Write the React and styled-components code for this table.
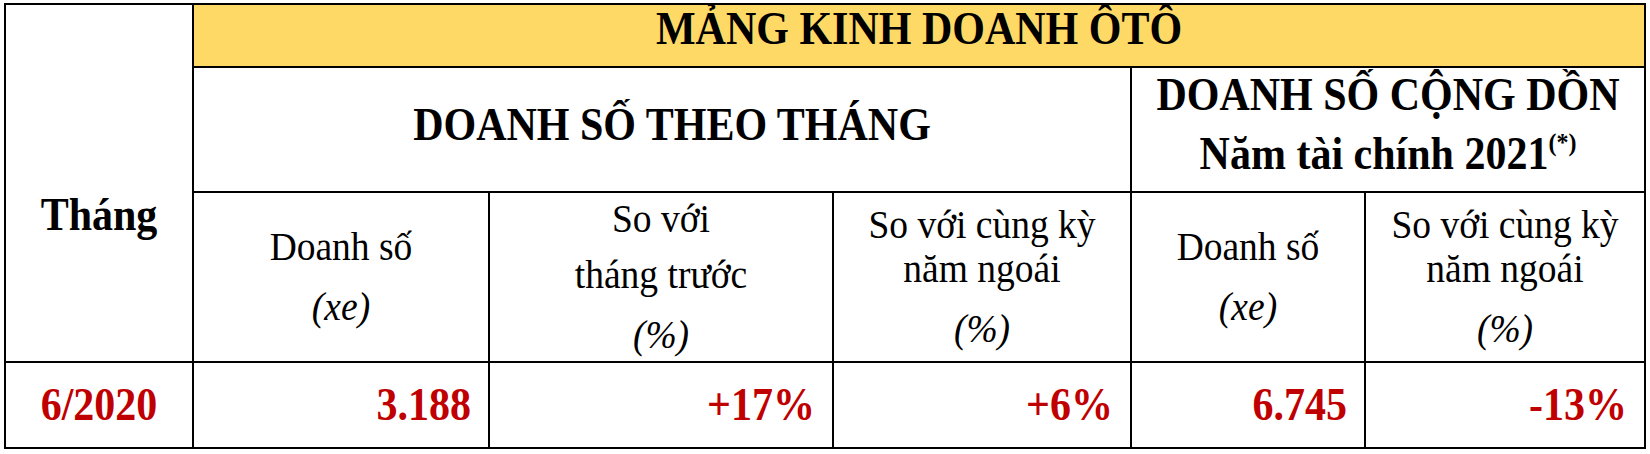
import React from 'react';
import styled, { createGlobalStyle } from 'styled-components';

const GlobalStyle = createGlobalStyle`
  html, body {
    margin: 0;
    padding: 0;
    background: #ffffff;
  }
  body {
    font-family: 'Liberation Serif', 'Times New Roman', serif;
    color: #000000;
  }
`;

const RED = '#C00000';
const GOLD = '#FFD966';

// 표 레이아웃: 검은 배경 + 2px gap 으로 테두리선을 만든다
const Page = styled.div`
  padding: 3px 0 0 4px;
`;

const Table = styled.div`
  display: grid;
  grid-template-columns: 186px 294px 342px 296px 232px 278px;
  grid-template-rows: 61px 123px 168px 84px;
  gap: 2px;
  padding: 2px;
  background: #000000;
  width: max-content;
`;

const Cell = styled.div`
  background: ${props => (props.gold ? GOLD : '#ffffff')};
  display: flex;
  flex-direction: column;
  justify-content: center;
  align-items: ${props => (props.right ? 'flex-end' : 'center')};
  text-align: center;
  box-sizing: border-box;
  min-width: 0;
`;

const MonthCell = styled(Cell)`
  grid-row: 1 / 4;
  grid-column: 1;
  padding-top: 64px;
`;

const TitleCell = styled(Cell)`
  grid-row: 1;
  grid-column: 2 / 7;
  padding-bottom: 14px;
`;

const MonthlyCell = styled(Cell)`
  grid-row: 2;
  grid-column: 2 / 5;
  padding: 0 0 9px 20px;
`;

const CumulativeCell = styled(Cell)`
  grid-row: 2;
  grid-column: 5 / 7;
  padding-bottom: 10px;
`;

const DataCell = styled(Cell)`
  padding-right: ${props => (props.right ? '17px' : '0')};
`;

// 원본 글꼴이 세로로 약간 길어서 scaleY 로 맞춘다
const BoldText = styled.div`
  font-weight: 700;
  font-size: 42px;
  line-height: ${props => props.lh || '42px'};
  color: ${props => (props.red ? RED : '#000000')};
  white-space: nowrap;
  transform: scaleY(1.08);
`;

const Sup = styled.sup`
  font-size: 24px;
  line-height: 0;
  vertical-align: 17px;
`;

const HeadLine = styled.div`
  font-size: 37.5px;
  line-height: 44px;
  white-space: nowrap;
  transform: scaleY(1.08);
  margin-top: ${props => props.gap || 0}px;
`;

const UnitLine = styled(HeadLine)`
  font-style: italic;
  margin-top: 16px;
`;

const subHeaders = [
  { lines: ['Doanh số'], unit: '(xe)' },
  { lines: ['So với', 'tháng trước'], unit: '(%)', gap: 12 },
  { lines: ['So với cùng kỳ', 'năm ngoái'], unit: '(%)' },
  { lines: ['Doanh số'], unit: '(xe)' },
  { lines: ['So với cùng kỳ', 'năm ngoái'], unit: '(%)' },
];

const dataRow = ['3.188', '+17%', '+6%', '6.745', '-13%'];

export default function App() {
  return (
    <Page>
      <GlobalStyle />
      <Table>
        <MonthCell>
          <BoldText>Tháng</BoldText>
        </MonthCell>
        <TitleCell gold>
          <BoldText>MẢNG KINH DOANH ÔTÔ</BoldText>
        </TitleCell>
        <MonthlyCell>
          <BoldText>DOANH SỐ THEO THÁNG</BoldText>
        </MonthlyCell>
        <CumulativeCell>
          <BoldText lh="59px">DOANH SỐ CỘNG DỒN</BoldText>
          <BoldText lh="59px">
            Năm tài chính 2021<Sup>(*)</Sup>
          </BoldText>
        </CumulativeCell>

        {subHeaders.map((h, i) => (
          <Cell key={i}>
            {h.lines.map((line, j) => (
              <HeadLine key={j} gap={j > 0 ? h.gap : 0}>
                {line}
              </HeadLine>
            ))}
            <UnitLine>{h.unit}</UnitLine>
          </Cell>
        ))}

        <DataCell>
          <BoldText red>6/2020</BoldText>
        </DataCell>
        {dataRow.map((v, i) => (
          <DataCell key={i} right>
            <BoldText red>{v}</BoldText>
          </DataCell>
        ))}
      </Table>
    </Page>
  );
}
